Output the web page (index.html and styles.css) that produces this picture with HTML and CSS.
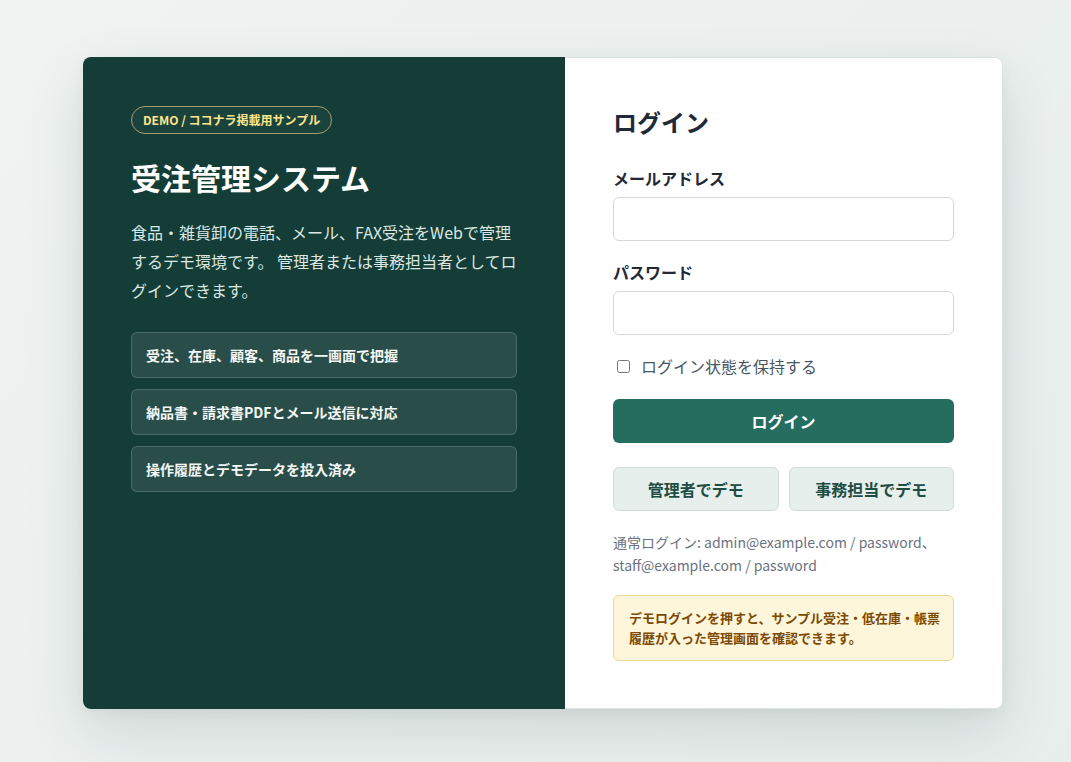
FILE: index.html
```html
<!DOCTYPE html>
<html lang="ja">
<head>
<meta charset="utf-8">
<title>受注管理システム ログイン</title>
<link rel="stylesheet" href="styles.css">
</head>
<body>
<div class="page">
  <main class="card">
    <section class="intro">
      <span class="badge">DEMO / ココナラ掲載用サンプル</span>
      <h1 class="title">受注管理システム</h1>
      <p class="lead">食品・雑貨卸の電話、メール、FAX受注をWebで管理するデモ環境です。 管理者または事務担当者としてログインできます。</p>
      <ul class="features">
        <li class="feature">受注、在庫、顧客、商品を一画面で把握</li>
        <li class="feature">納品書・請求書PDFとメール送信に対応</li>
        <li class="feature">操作履歴とデモデータを投入済み</li>
      </ul>
    </section>
    <section class="login">
      <h2 class="login-title">ログイン</h2>
      <form class="form">
        <div class="field">
          <label class="label" for="email">メールアドレス</label>
          <input class="input" id="email" type="email">
        </div>
        <div class="field">
          <label class="label" for="password">パスワード</label>
          <input class="input" id="password" type="password">
        </div>
        <label class="remember"><input class="check" type="checkbox"><span>ログイン状態を保持する</span></label>
        <button class="btn-primary" type="button">ログイン</button>
        <div class="demo-row">
          <button class="btn-demo" type="button">管理者でデモ</button>
          <button class="btn-demo" type="button">事務担当でデモ</button>
        </div>
      </form>
      <p class="help">通常ログイン: admin@example.com / password、<br>staff@example.com / password</p>
      <div class="notice">デモログインを押すと、サンプル受注・低在庫・帳票履歴が入った管理画面を確認できます。</div>
    </section>
  </main>
</div>
</body>
</html>
```
FILE: styles.css
```css
* { box-sizing: border-box; }
html, body { margin: 0; padding: 0; }
body {
  font-family: "Noto Sans CJK JP", "Noto Sans", sans-serif;
  background: linear-gradient(135deg, #eff3f2 0%, #e8eeec 100%);
  min-height: 100vh;
  color: #1f2937;
}
.page {
  padding: 57px 68px 53px 83px;
}
.card {
  display: flex;
  width: 920px;
  border-radius: 8px;
  box-shadow: 0 24px 60px rgba(20, 50, 45, 0.12), 0 4px 14px rgba(20, 50, 45, 0.05);
}
.intro {
  width: 482px;
  flex: none;
  background: #143d38;
  border-radius: 8px 0 0 8px;
  padding: 49px 44px 48px 48px;
  color: #ffffff;
}
.badge {
  display: inline-block;
  height: 28px;
  line-height: 26px;
  padding: 0 11px;
  border: 1px solid #a89f6e;
  border-radius: 14px;
  background: rgba(255, 255, 255, 0.03);
  color: #fde68a;
  font-size: 12px;
  font-weight: 700;
}
.title {
  margin: 23px 0 0;
  font-size: 30px;
  line-height: 40px;
  font-weight: 700;
  letter-spacing: 0;
}
.lead {
  margin: 21px 0 0;
  font-size: 16px;
  line-height: 29px;
  color: #dbe7e3;
}
.features {
  list-style: none;
  margin: 27px 0 0;
  padding: 0;
  width: 386px;
  display: flex;
  flex-direction: column;
  gap: 11px;
}
.feature {
  height: 46px;
  display: flex;
  align-items: center;
  padding: 0 14px;
  border: 1px solid rgba(255, 255, 255, 0.16);
  border-radius: 6px;
  background: rgba(255, 255, 255, 0.09);
  font-size: 14px;
  font-weight: 700;
  color: #f4f7f6;
}
.login {
  flex: 1;
  background: #ffffff;
  border: 1px solid #dde3e1;
  border-left: none;
  border-radius: 0 8px 8px 0;
  padding: 47px 48px 47px 48px;
}
.login-title {
  margin: 0;
  font-size: 24px;
  line-height: 34px;
  font-weight: 700;
  color: #1f2937;
}
.form {
  margin-top: 28px;
}
.field {
  display: flex;
  flex-direction: column;
  margin-bottom: 20px;
}
.label {
  font-size: 16px;
  line-height: 22px;
  font-weight: 700;
  color: #1f2937;
  margin-bottom: 8px;
}
.input {
  height: 44px;
  border: 1px solid #d4d8dc;
  border-radius: 6px;
  background: #ffffff;
  font: inherit;
  padding: 0 12px;
}
.remember {
  display: flex;
  align-items: center;
  gap: 11px;
  height: 22px;
  margin-top: 17px;
  padding-left: 4px;
  font-size: 16px;
  color: #4b5563;
}
.check {
  width: 13px;
  height: 13px;
  margin: 0;
}
.btn-primary {
  display: block;
  width: 100%;
  height: 44px;
  margin-top: 22px;
  border: none;
  border-radius: 6px;
  background: #246d5f;
  color: #ffffff;
  font-family: inherit;
  font-size: 16px;
  font-weight: 700;
}
.demo-row {
  display: flex;
  gap: 10px;
  margin-top: 24px;
}
.btn-demo {
  flex: 1;
  height: 44px;
  border: 1px solid #cfdcd8;
  border-radius: 6px;
  background: #e6efec;
  color: #1e4d44;
  font-family: inherit;
  font-size: 16px;
  font-weight: 700;
}
.help {
  margin: 20px 0 0;
  font-size: 14px;
  line-height: 23px;
  color: #6b7280;
}
.notice {
  margin-top: 18px;
  padding: 12px 12px 12px 15px;
  border: 1px solid #f1d58c;
  border-radius: 6px;
  background: #fef6db;
  color: #7c4a03;
  font-size: 13px;
  line-height: 20px;
  font-weight: 700;
}
```
